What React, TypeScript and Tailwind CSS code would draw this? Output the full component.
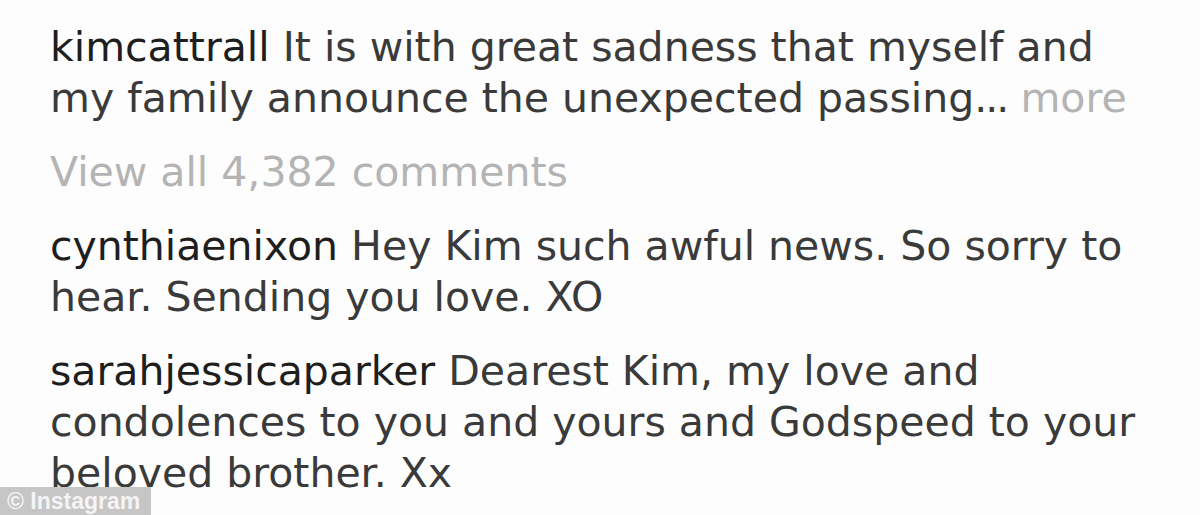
import React from "react";

const font = { fontFamily: '"DejaVu Sans", "Liberation Sans", sans-serif' };

function Line({ children }: { children: React.ReactNode }) {
  return <div className="whitespace-nowrap">{children}</div>;
}

function User({ children }: { children: React.ReactNode }) {
  return <span className="text-[#1e1e1e]">{children}</span>;
}

export default function App() {
  return (
    <div
      className="relative h-[515px] w-[1200px] overflow-hidden bg-[#fdfdfd] font-['DejaVu_Sans','Liberation_Sans',sans-serif] text-[41px] leading-[51px] text-[#3a3a3a]"
      style={font}
    >
      <div className="flex flex-col gap-[23px] pl-[50px] pt-[22px]">
        <div>
          <Line>
            <User>kimcattrall</User> It is with great sadness that myself and
          </Line>
          <Line>
            my family announce the unexpected passing
            <span className="tracking-[-2px]">...</span>{" "}
            <span className="text-[#b4b4b4]">more</span>
          </Line>
        </div>
        <div className="text-[#b4b4b4]">
          <Line>View all 4,382 comments</Line>
        </div>
        <div>
          <Line>
            <User>cynthiaenixon</User> Hey Kim such awful news. So sorry to
          </Line>
          <Line>hear. Sending you love. XO</Line>
        </div>
        <div>
          <Line>
            <User>sarahjessicaparker</User> Dearest Kim, my love and
          </Line>
          <Line>condolences to you and yours and Godspeed to your</Line>
          <Line>beloved brother. Xx</Line>
        </div>
      </div>
      <div className="absolute bottom-0 left-0 flex h-[28px] w-[151px] items-center bg-[#c6c6c6] pl-[7px] font-['Liberation_Sans',sans-serif] text-[23px] font-bold leading-none text-[#f4f4f4]">
        © Instagram
      </div>
    </div>
  );
}
